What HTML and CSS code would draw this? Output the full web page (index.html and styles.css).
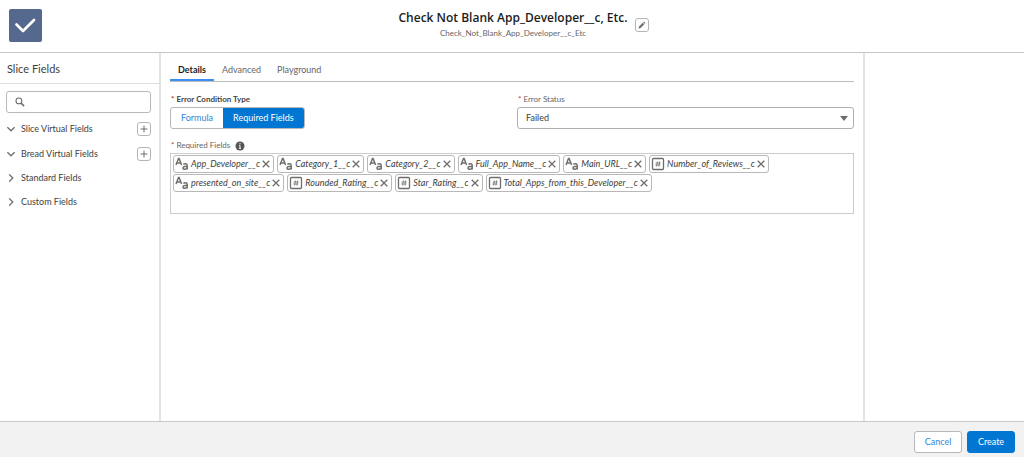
FILE: index.html
```html
<!DOCTYPE html>
<html lang="en">
<head>
<meta charset="utf-8">
<title>Check Not Blank App_Developer__c, Etc.</title>
<link rel="stylesheet" href="styles.css">
</head>
<body>
<svg class="defs" aria-hidden="true">
  <symbol id="text" viewBox="0 0 14 14"><path d="M1 8 3.5 1.5h.6L6.6 8M2 6h3.8M8.4 7.4c1.5-1 3.8-.8 3.8 1v4.1M12.2 9.3c-2.5 0-4.2.4-4.2 1.7 0 2 3.5 1.7 4.2-.2" fill="none" stroke="currentColor" stroke-width="1.5"/></symbol>
  <symbol id="number" viewBox="0 0 14 14"><rect x="1.5" y="1.5" width="11" height="11" rx="1" fill="none" stroke="currentColor" stroke-width="1.3"/><path d="M6.4 4.4 5.6 9.6M8.7 4.4 7.9 9.6M4.6 6h5M4.3 8h5" fill="none" stroke="currentColor" stroke-width=".8"/></symbol>
  <symbol id="close" viewBox="0 0 8 8"><path d="m.7.7 6.6 6.6M7.3.7.7 7.3" fill="none" stroke="currentColor" stroke-width="1.3"/></symbol>
  <symbol id="plus" viewBox="0 0 8 8"><path d="M4 .6v6.8M.6 4h6.8" fill="none" stroke="currentColor" stroke-width="1"/></symbol>
  <symbol id="down" viewBox="0 0 8 8"><path d="m.4 2.2 3.6 3.6 3.6-3.6" fill="none" stroke="currentColor" stroke-width="1.3"/></symbol>
  <symbol id="right" viewBox="0 0 8 8"><path d="M2.2.4 5.8 4 2.2 7.6" fill="none" stroke="currentColor" stroke-width="1.3"/></symbol>
</svg>

<header class="header">
  <svg class="logo" viewBox="0 0 33 33" aria-hidden="true"><rect width="33" height="33" rx="2" fill="#54698d"/><path d="m7.5 15.5 6.5 6.5L25 11" fill="none" stroke="#fff" stroke-width="2.7" stroke-linecap="round" stroke-linejoin="round"/></svg>
  <div class="heading">
    <div>
      <h1 class="title">Check Not Blank App_Developer__c, Etc.</h1>
      <p class="api-name">Check_Not_Blank_App_Developer__c_Etc</p>
    </div>
    <button class="icon-button" aria-label="Edit"><svg class="icon" viewBox="0 0 8 8"><path d="M.5 7.5 1 5.4l3.7-3.7 1.6 1.6L2.6 7zM5.2 1.2l.8-.8 1.6 1.6-.8.8z" fill="currentColor"/></svg></button>
  </div>
</header>

<div class="workspace">
  <aside class="sidebar">
    <h2 class="sidebar-title">Slice Fields</h2>
    <div class="sidebar-body">
      <label class="search">
        <svg class="search-icon" viewBox="0 0 10 10" aria-hidden="true"><circle cx="3.9" cy="3.9" r="2.9" fill="none" stroke="currentColor" stroke-width="1.1"/><path d="m6.1 6.1 3 3" stroke="currentColor" stroke-width="1.5"/></svg>
        <input class="search-input" type="text" aria-label="Search fields">
      </label>
      <ul class="tree">
        <li class="tree-item tall"><button class="tree-toggle" aria-expanded="true"><svg class="icon"><use href="#down"/></svg>Slice Virtual Fields</button><button class="icon-button" aria-label="Add slice virtual field"><svg class="icon"><use href="#plus"/></svg></button></li>
        <li class="tree-item tall"><button class="tree-toggle" aria-expanded="true"><svg class="icon"><use href="#down"/></svg>Bread Virtual Fields</button><button class="icon-button" aria-label="Add bread virtual field"><svg class="icon"><use href="#plus"/></svg></button></li>
        <li class="tree-item"><button class="tree-toggle" aria-expanded="false"><svg class="icon"><use href="#right"/></svg>Standard Fields</button></li>
        <li class="tree-item"><button class="tree-toggle" aria-expanded="false"><svg class="icon"><use href="#right"/></svg>Custom Fields</button></li>
      </ul>
    </div>
  </aside>

  <main class="main">
    <div class="tabs" role="tablist">
      <button class="tab active" role="tab" aria-selected="true">Details</button>
      <button class="tab" role="tab" aria-selected="false">Advanced</button>
      <button class="tab" role="tab" aria-selected="false">Playground</button>
    </div>
    <div class="form-row">
      <div class="field" role="group" aria-labelledby="condition-label">
        <div class="label strong" id="condition-label"><span class="star">*</span>Error Condition Type</div>
        <div class="toggle-group">
          <button class="toggle" aria-pressed="false">Formula</button><button class="toggle selected" aria-pressed="true">Required Fields</button>
        </div>
      </div>
      <div class="field">
        <label class="label" for="status"><span class="star">*</span>Error Status</label>
        <div class="select-wrap">
          <select class="select" id="status"><option>Failed</option></select>
          <svg class="arrow" viewBox="0 0 8 5" aria-hidden="true"><path d="M0 0h8L4 5z" fill="currentColor"/></svg>
        </div>
      </div>
    </div>
    <div class="label required-label" id="required-label"><span class="star">*</span>Required Fields
      <svg class="info" viewBox="0 0 10 10" aria-hidden="true"><circle cx="5" cy="5" r="4.5" fill="#555"/><path d="M5 2v1.3M4.2 4.4H5v3M4 7.3h2" fill="none" stroke="#fff" stroke-width="1"/></svg>
    </div>
    <ul class="chips" aria-labelledby="required-label">
      <li class="chip"><svg class="type"><use href="#text"/></svg><em>App_Developer__c</em><button class="remove" aria-label="Remove"><svg class="icon"><use href="#close"/></svg></button></li>
      <li class="chip"><svg class="type"><use href="#text"/></svg><em>Category_1__c</em><button class="remove" aria-label="Remove"><svg class="icon"><use href="#close"/></svg></button></li>
      <li class="chip"><svg class="type"><use href="#text"/></svg><em>Category_2__c</em><button class="remove" aria-label="Remove"><svg class="icon"><use href="#close"/></svg></button></li>
      <li class="chip"><svg class="type"><use href="#text"/></svg><em>Full_App_Name__c</em><button class="remove" aria-label="Remove"><svg class="icon"><use href="#close"/></svg></button></li>
      <li class="chip"><svg class="type"><use href="#text"/></svg><em>Main_URL__c</em><button class="remove" aria-label="Remove"><svg class="icon"><use href="#close"/></svg></button></li>
      <li class="chip"><svg class="type"><use href="#number"/></svg><em>Number_of_Reviews__c</em><button class="remove" aria-label="Remove"><svg class="icon"><use href="#close"/></svg></button></li>
      <li class="chip"><svg class="type"><use href="#text"/></svg><em>presented_on_site__c</em><button class="remove" aria-label="Remove"><svg class="icon"><use href="#close"/></svg></button></li>
      <li class="chip"><svg class="type"><use href="#number"/></svg><em>Rounded_Rating__c</em><button class="remove" aria-label="Remove"><svg class="icon"><use href="#close"/></svg></button></li>
      <li class="chip"><svg class="type"><use href="#number"/></svg><em>Star_Rating__c</em><button class="remove" aria-label="Remove"><svg class="icon"><use href="#close"/></svg></button></li>
      <li class="chip"><svg class="type"><use href="#number"/></svg><em>Total_Apps_from_this_Developer__c</em><button class="remove" aria-label="Remove"><svg class="icon"><use href="#close"/></svg></button></li>
    </ul>
  </main>
  <aside class="side-panel"></aside>
</div>

<footer class="footer">
  <button class="button">Cancel</button>
  <button class="button primary">Create</button>
</footer>
</body>
</html>
```

FILE: styles.css
```css
* { box-sizing: border-box; }

body {
  margin: 0;
  min-height: 100vh;
  display: flex;
  flex-direction: column;
  background: #fff;
  color: #3e3e3c;
  font: 9px/14px Lato, "Open Sans", sans-serif;
}

h1, h2, p, ul { margin: 0; padding: 0; }
ul { list-style: none; }
button, input, select { font: inherit; color: inherit; }
button { padding: 0; border: 0; background: none; }
svg { display: block; flex: none; }

.defs { position: absolute; width: 0; height: 0; }
.icon { width: 8px; height: 8px; color: #706e6b; }

.header {
  display: grid;
  grid-template-columns: 1fr auto 1fr;
  align-items: start;
  padding: 9px 9px 10px;
  border-bottom: 1px solid #c6c6c6;
}
.logo { width: 33px; height: 33px; }
.heading { display: flex; align-items: center; gap: 8px; padding-left: 24px; text-align: center; }
.title { color: #1c1c1c; font-family: "Open Sans", sans-serif; font-size: 12px; line-height: 17px; font-weight: 600; }
.api-name { color: #666; font-size: 8px; line-height: 14px; }

.icon-button {
  display: grid;
  place-items: center;
  width: 14px;
  height: 14px;
  border: 1px solid #b5b5b5;
  border-radius: 3px;
  background: #fff;
}

.workspace {
  flex: 1;
  display: grid;
  grid-template-columns: 161px 1fr 161px;
}
.sidebar { border-right: 2px solid #e2e2e2; }
.sidebar-title {
  padding: 9px 7px 7px;
  border-bottom: 1px solid #dedede;
  font-size: 11px;
  line-height: 14px;
  font-weight: 400;
}
.sidebar-body { padding: 7px 8px 7px 6px; }
.search {
  display: flex;
  align-items: center;
  gap: 6px;
  height: 22px;
  padding: 0 8px;
  border: 1px solid #b8b8b8;
  border-radius: 3px;
}
.search-icon { width: 10px; height: 10px; color: #706e6b; }
.search-input { flex: 1; min-width: 0; padding: 0; border: 0; outline: 0; background: none; }
.tree { padding-top: 3px; }
.tree-item { display: flex; align-items: center; justify-content: space-between; height: 24px; }
.tree-item.tall { height: 25px; }
.tree-toggle { display: flex; align-items: center; gap: 6px; padding-left: 1px; }

.main { padding: 5px 9px 10px; }
.tabs { display: flex; border-bottom: 1px solid #bcbcbc; }
.tab { padding: 5px 8px 2px; border-bottom: 2px solid transparent; color: #666; }
.tab.active { border-color: #3c8df5; color: #1c1c1c; font-weight: 700; }

.form-row { display: grid; grid-template-columns: 1fr 1fr; gap: 10px; padding-top: 10px; }
.label { display: flex; align-items: center; padding-left: 1px; color: #666; font-size: 8px; line-height: 15px; }
.label.strong { color: #444; font-weight: 700; }
.star { padding-right: 2px; color: #c23934; }
.toggle-group {
  display: flex;
  width: fit-content;
  height: 22px;
  border: 1px solid #b8b8b8;
  border-radius: 3px;
  overflow: hidden;
}
.toggle { padding: 0 10px; color: #3085d8; }
.toggle.selected { background: #0176d3; color: #fff; }
.select-wrap { position: relative; }
.select {
  display: block;
  width: 100%;
  height: 22px;
  padding: 0 8px;
  border: 1px solid #b0b0b0;
  border-radius: 3px;
  background: #fff;
  appearance: none;
}
.arrow { position: absolute; right: 6px; top: 9px; width: 8px; height: 5px; color: #706e6b; pointer-events: none; }

.required-label { padding-top: 9px; }
.info { width: 10px; height: 10px; margin-left: 5px; }
.chips {
  display: flex;
  flex-wrap: wrap;
  align-content: flex-start;
  gap: 1px 3px;
  min-height: 61px;
  padding: 1px 2px;
  border: 1px solid #ccc;
}
.chip {
  display: flex;
  align-items: center;
  gap: 2px;
  height: 18px;
  padding: 0 3px 0 1px;
  border: 1px solid #b8b8b8;
  border-radius: 3px;
}
.type { width: 14px; height: 14px; color: #706e6b; }

.side-panel { border-left: 2px solid #e2e2e2; }

.footer {
  display: flex;
  justify-content: flex-end;
  gap: 5px;
  padding: 9px 9px 4px;
  border-top: 1px solid #c9c9c9;
  background: #f2f2f2;
}
.button {
  min-width: 48px;
  height: 22px;
  border: 1px solid #b8b8b8;
  border-radius: 3px;
  background: #fff;
  color: #3085d8;
}
.button.primary { border-color: #0176d3; background: #0176d3; color: #fff; }
```
